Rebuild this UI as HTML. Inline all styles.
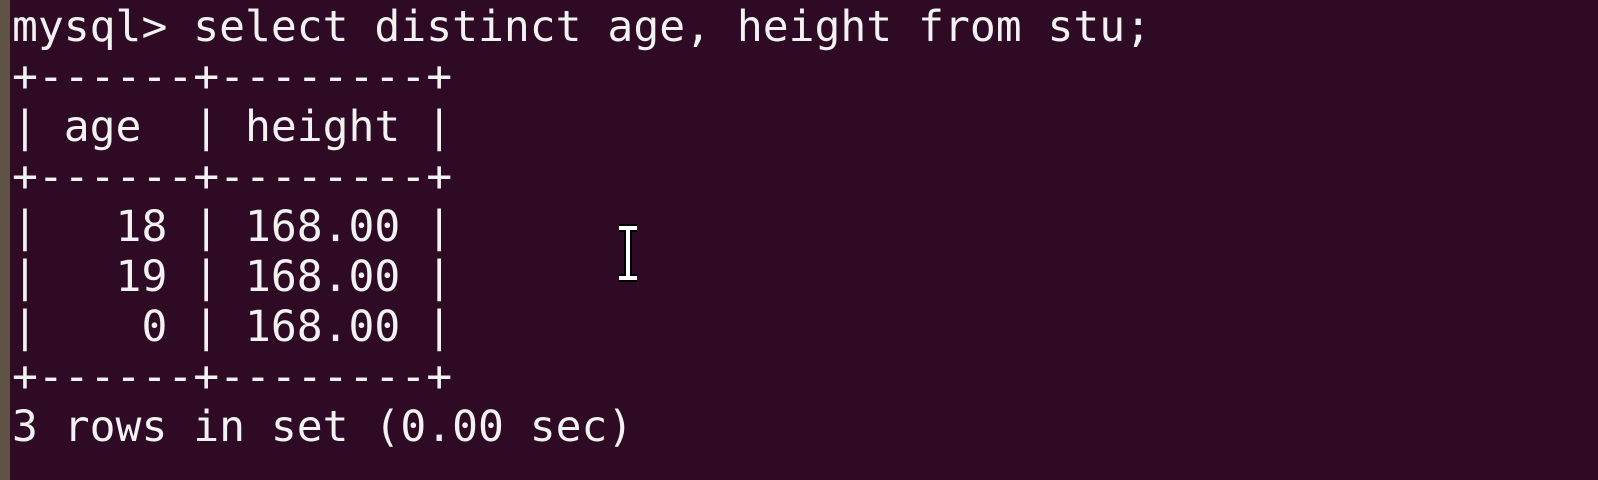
<!DOCTYPE html><html><head><style>
html,body{margin:0;padding:0;width:1598px;height:480px;overflow:hidden;background:#2f0a24;}
.bar{position:absolute;left:0;top:0;width:10px;height:480px;background:#5f5346;}
pre{position:absolute;left:12px;top:2px;margin:0;font-family:"DejaVu Sans Mono","Liberation Mono",monospace;font-size:43px;line-height:50px;color:#f2f2f2;}
pre div{height:50px;}
.cur{position:absolute;left:615px;top:224px;width:26px;height:58px;}
</style></head><body><div class="bar"></div>
<pre><div>mysql&gt; select distinct age, height from stu;</div><div>+------+--------+</div><div>| age  | height |</div><div>+------+--------+</div><div>|   18 | 168.00 |</div><div>|   19 | 168.00 |</div><div>|    0 | 168.00 |</div><div>+------+--------+</div><div>3 rows in set (0.00 sec)</div></pre>
<svg class="cur" viewBox="0 0 26 58"><path d="M4 4h18M13 4v50M4 54h18" stroke="#000" stroke-width="8" fill="none"/><path d="M4 4h18M13 4v50M4 54h18" stroke="#fff" stroke-width="4" fill="none"/></svg>
</body></html>
